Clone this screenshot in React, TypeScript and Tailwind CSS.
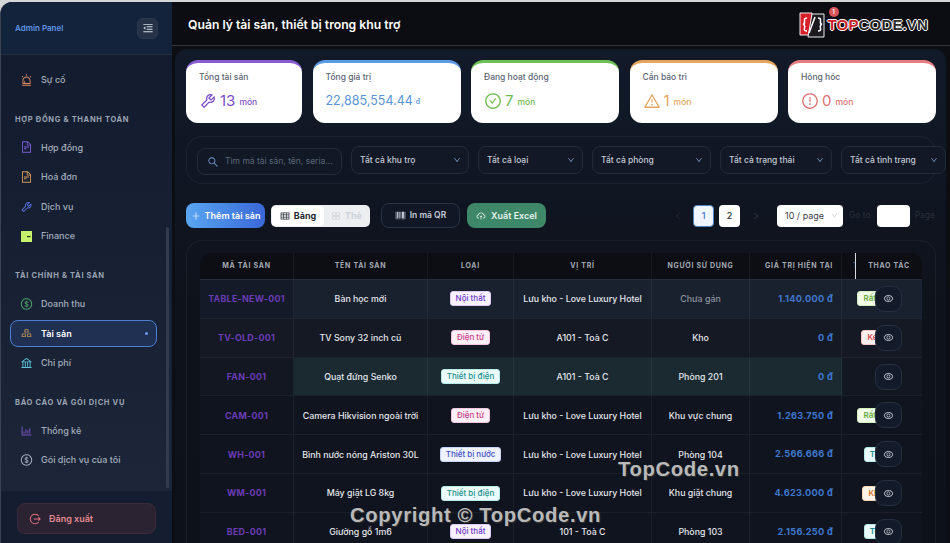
import type { ReactNode } from "react";
import {
  AiOutlineAlert,
  AiOutlineAppstore,
  AiOutlineBank,
  AiOutlineBarChart,
  AiOutlineBarcode,
  AiOutlineCheckCircle,
  AiOutlineCloudUpload,
  AiOutlineDollar,
  AiOutlineDown,
  AiOutlineExclamationCircle,
  AiOutlineEye,
  AiOutlineFileText,
  AiOutlineGold,
  AiOutlineLeft,
  AiOutlineMenuFold,
  AiOutlinePlus,
  AiOutlineRight,
  AiOutlineSearch,
  AiOutlineTable,
  AiOutlineTool,
  AiOutlineWarning,
} from "react-icons/ai";

function FinanceIcon() {
  return (
    <svg width="11" height="11" viewBox="0 0 11 11">
      <rect width="11" height="11" fill="#c8f26b" />
      <rect x="6" y="5" width="3.5" height="1.2" fill="#26351a" />
    </svg>
  );
}

function LogoutIcon() {
  return (
    <svg width="12" height="12" viewBox="0 0 13 13" fill="none" stroke="#e0727c" strokeWidth="1.1">
      <path d="M10.6 3.2A5.2 5.2 0 1 0 10.6 9.8" />
      <path d="M5.2 6.5H12M10.2 4.8L12 6.5L10.2 8.2" />
    </svg>
  );
}

function NavItem({ icon, label, active }: { icon: ReactNode; label: string; active?: boolean }) {
  return (
    <div
      className={
        active
          ? "my-[1.3px] ml-[9px] mr-[15px] flex h-[27px] items-center rounded-lg border-[1.5px] border-[#4d7fd0] bg-[#1f3053] pl-[9px] pr-[8px] text-[9px] font-semibold text-white"
          : "ml-[9px] mr-[15px] flex h-[29.6px] items-center pl-[10px] text-[9px] font-medium text-[#a5aebd]"
      }
    >
      <span className="flex w-[13px] justify-center text-[14px]">{icon}</span>
      <span className="ml-[8px] flex-1">{label}</span>
      {active && <span className="h-[3px] w-[3px] rounded-full bg-[#6d9ce8]" />}
    </div>
  );
}

function NavLabel({ text }: { text: string }) {
  return (
    <div className="mb-[6px] mt-[18px] flex h-[14px] items-center pl-[14px] text-[7.5px] font-bold uppercase tracking-[0.09em] text-[#9aa3b2]">
      {text}
    </div>
  );
}

function Sidebar() {
  return (
    <aside className="relative flex w-[172px] shrink-0 flex-col overflow-hidden rounded-tl-xl border-l border-[#3a4352] bg-gradient-to-b from-[#121b2e] to-[#1d2739]">
      <div className="flex h-[53px] shrink-0 items-center justify-between border-b border-[#232e42] bg-[#14233c] pl-[14px] pr-[14px]">
        <span className="text-[8px] font-semibold text-[#5f95e6]">Admin Panel</span>
        <span className="flex h-[21px] w-[21px] items-center justify-center rounded-md border border-[#2c3a4f] bg-[#263347] text-[12px] text-[#d5dbe5]">
          <AiOutlineMenuFold />
        </span>
      </div>
      <nav className="flex-1 pt-[10px]">
        <NavItem icon={<AiOutlineAlert className="text-[#e08a62]" />} label="Sự cố" />
        <NavLabel text="Hợp đồng & Thanh toán" />
        <NavItem icon={<AiOutlineFileText className="text-[#7b5bd6]" />} label="Hợp đồng" />
        <NavItem icon={<AiOutlineFileText className="text-[#d49a5c]" />} label="Hoá đơn" />
        <NavItem icon={<AiOutlineTool className="text-[#5b6fdc]" />} label="Dịch vụ" />
        <NavItem icon={<FinanceIcon />} label="Finance" />
        <NavLabel text="Tài chính & Tài sản" />
        <NavItem icon={<AiOutlineDollar className="text-[#4fa56b]" />} label="Doanh thu" />
        <NavItem active icon={<AiOutlineGold className="text-[#c79a55]" />} label="Tài sản" />
        <NavItem icon={<AiOutlineBank className="text-[#5ec3d8]" />} label="Chi phí" />
        <NavLabel text="Báo cáo và gói dịch vụ" />
        <NavItem icon={<AiOutlineBarChart className="text-[#7d55c9]" />} label="Thống kê" />
        <NavItem icon={<AiOutlineDollar className="text-[#aab3c2]" />} label="Gói dịch vụ của tôi" />
      </nav>
      <div className="absolute right-[3px] top-[225px] h-[261px] w-[3px] rounded-full bg-[#323c4e]" />
      <div className="flex h-[53px] shrink-0 items-start border-t border-[#1c2638] bg-[#151e30] px-[16px] pt-[12px]">
        <button className="flex h-[31px] w-[139px] items-center rounded-lg border border-[#3b2a38] bg-[#2b2331] pl-[11px] text-[9px] font-semibold text-[#e58c93]">
          <LogoutIcon />
          <span className="ml-[8px]">Đăng xuất</span>
        </button>
      </div>
    </aside>
  );
}

function Logo() {
  return (
    <div className="relative flex items-center pt-[3px]">
      <svg width="27" height="28" viewBox="0 0 27 28">
        <path d="M1 2H13L11 24H1Z" fill="#d8202a" stroke="#eee" strokeWidth="1" />
        <path d="M13 3H25V26H9Z" fill="#1b1b1f" stroke="#eee" strokeWidth="1" />
        <path d="M8 7Q5 7 5.5 10T4 13.5Q6.5 14 5.5 17T8 20" fill="none" stroke="#fff" strokeWidth="1.5" />
        <path d="M19 7Q22 7 21.5 10T23 13.5Q20.5 14 21.5 17T19 20" fill="none" stroke="#fff" strokeWidth="1.5" />
        <path d="M16 6L10 22" stroke="#fff" strokeWidth="1.6" />
      </svg>
      <span className="ml-[2px] font-['Liberation_Sans',sans-serif] text-[15px] font-bold tracking-[0.01em] text-[#c9242c] [text-shadow:1px_0_0_#fff,-1px_0_0_#fff,0_1px_0_#fff,0_-1px_0_#fff]">
        TOP<span className="text-[#2b2b2b]">CODE.VN</span>
      </span>
      <span className="absolute left-[30px] top-[-1px] flex h-[10px] w-[10px] items-center justify-center rounded-full bg-[#d9535a] text-[6px] font-semibold leading-none text-white">
        1
      </span>
    </div>
  );
}

function StatCard({
  title,
  bar,
  color,
  icon,
  value,
  unit,
  wide,
  small,
}: {
  title: string;
  bar: string;
  color: string;
  icon?: ReactNode;
  value: string;
  unit: string;
  wide?: boolean;
  small?: boolean;
}) {
  return (
    <div className={`${wide ? "w-[116px] shrink-0" : "flex-1"} h-[63px] rounded-xl border-t-[3px] bg-white pl-[13px] pr-2 pt-[8px] ${bar}`}>
      <div className="text-[8.5px] font-medium text-[#5b6472]">{title}</div>
      <div className={`mt-[7px] flex items-center ${color}`}>
        {icon && <span className="mr-[3px] text-[18px]">{icon}</span>}
        <span className={small ? "text-[12.5px] leading-[20px]" : "text-[15px] leading-[20px]"}>{value}</span>
        <span className={small ? "ml-[3px] mt-[3px] text-[7px] font-medium" : "ml-[4px] mt-[3px] text-[8.5px] font-medium"}>{unit}</span>
      </div>
    </div>
  );
}

function SelectBox({ label, width }: { label: string; width: string }) {
  return (
    <div className={`${width} flex h-[28px] shrink-0 items-center justify-between rounded-lg border border-[#232c3c] bg-[#121826] pl-[8px] pr-[7px] text-[8.5px] font-medium text-[#c3cad5]`}>
      <span>{label}</span>
      <AiOutlineDown className="text-[8px] text-[#7f9cc9]" />
    </div>
  );
}

type Row = {
  code: string;
  name: string;
  type: string;
  typeClass: string;
  place: string;
  user: string;
  value: string;
  status?: string;
  statusClass?: string;
  rowClass: string;
};

const furniture = "border-[#dcc9f7] bg-[#f8f1ff] text-[#6d3bc4]";
const electronics = "border-[#f7c6de] bg-[#fff0f7] text-[#c43c86]";
const electric = "border-[#b5ece8] bg-[#eafbfa] text-[#1c8f8d]";
const water = "border-[#c8d3f7] bg-[#eff3ff] text-[#3d4fc0]";
const good = "border-[#d0efbd] bg-[#f2fce8] text-[#6aaa45]";
const bad = "border-[#f7c8c8] bg-[#fff0f0] text-[#cf4a4a]";
const ok = "border-[#b5ece8] bg-[#e8fbfa] text-[#1c8f8d]";
const fair = "border-[#f6d5b4] bg-[#fff4e8] text-[#d0772e]";

const rows: Row[] = [
  { code: "TABLE-NEW-001", name: "Bàn học mới", type: "Nội thất", typeClass: furniture, place: "Lưu kho - Love Luxury Hotel", user: "Chưa gán", value: "1.140.000 đ", status: "Rất tốt", statusClass: good, rowClass: "bg-[#1a212e]" },
  { code: "TV-OLD-001", name: "TV Sony 32 inch cũ", type: "Điện tử", typeClass: electronics, place: "A101 - Toà C", user: "Kho", value: "0 đ", status: "Kém", statusClass: bad, rowClass: "bg-[#141924]" },
  { code: "FAN-001", name: "Quạt đứng Senko", type: "Thiết bị điện", typeClass: electric, place: "A101 - Toà C", user: "Phòng 201", value: "0 đ", rowClass: "bg-[#121722]" },
  { code: "CAM-001", name: "Camera Hikvision ngoài trời", type: "Điện tử", typeClass: electronics, place: "Lưu kho - Love Luxury Hotel", user: "Khu vực chung", value: "1.263.750 đ", status: "Rất tốt", statusClass: good, rowClass: "bg-[#10141e]" },
  { code: "WH-001", name: "Bình nước nóng Ariston 30L", type: "Thiết bị nước", typeClass: water, place: "Lưu kho - Love Luxury Hotel", user: "Phòng 104", value: "2.566.666 đ", status: "Tốt", statusClass: ok, rowClass: "bg-[#10141e]" },
  { code: "WM-001", name: "Máy giặt LG 8kg", type: "Thiết bị điện", typeClass: electric, place: "Lưu kho - Love Luxury Hotel", user: "Khu giặt chung", value: "4.623.000 đ", status: "Khá", statusClass: fair, rowClass: "bg-[#10141e]" },
  { code: "BED-001", name: "Giường gỗ 1m6", type: "Nội thất", typeClass: furniture, place: "101 - Toà C", user: "Phòng 103", value: "2.156.250 đ", status: "Tốt", statusClass: ok, rowClass: "bg-[#10141e]" },
];

const cols = "grid grid-cols-[94px_134px_86px_138px_98px_92px_80px]";
const cell = "flex items-center justify-center border-r border-white/5 h-full";

function AssetTable() {
  return (
    <div className="relative w-[722px] overflow-hidden rounded-t-xl">
      <div className={`${cols} h-[26px] bg-[#0c0e13] text-[7px] font-bold uppercase tracking-[0.1em] text-[#a3a9b3]`}>
        <div className={cell}>Mã tài sản</div>
        <div className={cell}>Tên tài sản</div>
        <div className={cell}>Loại</div>
        <div className={cell}>Vị trí</div>
        <div className={cell}>Người sử dụng</div>
        <div className={`${cell} justify-end pr-[8px]`}>Giá trị hiện tại</div>
        <div className="flex items-center overflow-hidden whitespace-nowrap pl-[11px] text-[#4b5563]">Tình trạng</div>
      </div>
      <div className="absolute right-0 top-0 flex h-[26px] w-[67px] items-center justify-center border-l border-[#d7dbe0] bg-[#0c0e13] text-[7px] font-bold uppercase tracking-[0.1em] text-[#a3a9b3]">
        Thao tác
      </div>
      {rows.map((r) => {
        const fan = r.code === "FAN-001";
        const tint = fan ? `${cell} bg-[#1a2a30]` : cell;
        return (
          <div key={r.code} className={`${cols} relative h-[38.83px] border-t border-white/5 text-[8.8px] font-medium text-[#e4e7ec] ${r.rowClass}`}>
            <div className={`${cell} text-[8.9px] font-bold tracking-[0.03em] text-[#6a3cb5] ${r.code === "TABLE-NEW-001" ? "bg-[#141a28]" : ""}`}>{r.code}</div>
            <div className={tint}>{r.name}</div>
            <div className={tint}>
              <span className={`rounded-[3px] border px-[5px] py-[1px] text-[8px] leading-[11px] ${r.typeClass}`}>{r.type}</span>
            </div>
            <div className={tint}>{r.place}</div>
            <div className={`${tint} ${r.user === "Chưa gán" ? "text-[#8d94a0]" : ""}`}>{r.user}</div>
            <div className={`${tint} justify-end pr-[8px] text-[9.2px] font-bold tracking-[0.03em] text-[#3f78cf]`}>{r.value}</div>
            <div className="flex h-full items-center justify-center pr-[12px]">
              {r.status && (
                <span className={`whitespace-nowrap rounded-[3px] border px-[5px] py-[1px] text-[8px] font-semibold leading-[11px] ${r.statusClass}`}>{r.status}</span>
              )}
            </div>
            <div className={`absolute right-0 top-0 flex h-full items-center ${fan ? "w-[66px] bg-[#121722] pl-[19px]" : "w-[47px]"}`}>
              <span className="flex h-[26px] w-[27px] items-center justify-center rounded-[9px] border border-[#262f42] bg-[#131a29] text-[11px] text-[#c8cfda]">
                <AiOutlineEye />
              </span>
            </div>
          </div>
        );
      })}
    </div>
  );
}

export default function App() {
  return (
    <div className="relative flex h-[543px] w-[950px] overflow-hidden bg-[#d5d6d8] pt-[2px] font-['Inter',sans-serif]">
      <Sidebar />
      <main className="flex min-w-0 flex-1 flex-col bg-[#0c0e14]">
        <header className="flex h-[44px] shrink-0 items-center justify-between border-b border-[#33353a] bg-[#0b0d12] pl-[16px] pr-[22px]">
          <h1 className="pt-[3px] text-[12.2px] font-semibold text-white">Quản lý tài sản, thiết bị trong khu trợ</h1>
          <Logo />
        </header>
        <div className="ml-[3px] mt-[3px] w-[771px] flex-1 rounded-t-xl bg-gradient-to-b from-[#121a2a] via-[#0e121b] to-[#0d1119] pl-[11px] pt-[11px]">
          <div className="flex w-[750px] gap-[10.5px]">
            <StatCard wide title="Tổng tài sản" bar="border-[#8a5bd0]" color="text-[#7a4fc4]" icon={<AiOutlineTool />} value="13" unit="món" />
            <StatCard small title="Tổng giá trị" bar="border-[#5d9ae6]" color="text-[#5a93d6]" value="22,885,554.44" unit="đ" />
            <StatCard title="Đang hoạt động" bar="border-[#6fbf57]" color="text-[#6cb950]" icon={<AiOutlineCheckCircle />} value="7" unit="món" />
            <StatCard title="Cần bảo trì" bar="border-[#e6a55f]" color="text-[#e3a562]" icon={<AiOutlineWarning />} value="1" unit="món" />
            <StatCard title="Hỏng hóc" bar="border-[#e57f7f]" color="text-[#de6f6f]" icon={<AiOutlineExclamationCircle />} value="0" unit="món" />
          </div>

          <div className="mt-[13px] flex h-[48px] w-[750px] items-center gap-[9px] rounded-2xl border border-white/5 pl-[10px]">
            <div className="mt-[3px] flex h-[27px] w-[145px] shrink-0 items-center rounded-lg border border-[#232c3c] bg-[#121826] pl-[9px] text-[8.5px] text-[#5b6678]">
              <AiOutlineSearch className="text-[12px] text-[#6f97d6]" />
              <span className="ml-[6px]">Tìm mã tài sản, tên, seria...</span>
            </div>
            <SelectBox label="Tất cả khu trọ" width="w-[118px]" />
            <SelectBox label="Tất cả loại" width="w-[105px]" />
            <SelectBox label="Tất cả phòng" width="w-[119px]" />
            <SelectBox label="Tất cả trạng thái" width="w-[112px]" />
            <SelectBox label="Tất cả tình trạng" width="w-[105px]" />
          </div>

          <div className="mt-[19px] flex h-[25px] w-[750px] items-center text-[9px] font-semibold">
            <button className="flex h-[25px] w-[79px] items-center justify-center gap-[4px] rounded-lg bg-gradient-to-r from-[#5aa5f0] to-[#3a68d8] text-white">
              <AiOutlinePlus className="text-[10px]" />
              Thêm tài sản
            </button>
            <div className="ml-[6px] flex h-[22px] w-[99px] rounded-[5px] bg-[#eceef2] p-[1px]">
              <span className="flex w-[52px] items-center justify-center gap-[4px] rounded-[4px] bg-white font-bold text-[#252a33]">
                <AiOutlineTable className="text-[10px]" />
                Bảng
              </span>
              <span className="flex flex-1 items-center justify-center gap-[4px] font-bold text-[#ccd1d9]">
                <AiOutlineAppstore className="text-[10px]" />
                Thẻ
              </span>
            </div>
            <button className="ml-[11px] flex h-[25px] w-[79px] items-center justify-center gap-[4px] rounded-lg border border-[#2a3344] bg-[#111725] text-[8.5px] text-[#c5ccd8]">
              <AiOutlineBarcode className="text-[11px]" />
              In mã QR
            </button>
            <button className="ml-[7px] flex h-[25px] w-[79px] items-center justify-center gap-[5px] rounded-lg bg-[#3f8769] text-[#e6f2ec]">
              <AiOutlineCloudUpload className="text-[10px]" />
              Xuất Excel
            </button>
            <div className="ml-auto flex items-center pr-[1px] text-[9px] font-medium">
              <AiOutlineLeft className="mr-[11px] text-[8px] text-[#262b35]" />
              <span className="flex h-[22px] w-[21px] items-center justify-center rounded-[4px] border border-[#4f82cc] bg-[#f1f6fd] text-[#3f74c4]">1</span>
              <span className="ml-[5px] flex h-[22px] w-[21px] items-center justify-center rounded-[4px] bg-white text-[#2c323c]">2</span>
              <AiOutlineRight className="ml-[12px] text-[8px] text-[#3a404b]" />
              <span className="ml-[17px] flex h-[22px] w-[66px] items-center justify-between rounded-[4px] bg-white pl-[8px] pr-[5px] font-normal text-[#3a404b]">
                10 / page
                <AiOutlineDown className="text-[7px] text-[#c1c5cc]" />
              </span>
              <span className="ml-[6px] text-[8.5px] font-normal text-[#2a2f39]">Go to</span>
              <span className="ml-[6px] h-[22px] w-[33px] rounded-[4px] bg-white" />
              <span className="ml-[5px] text-[8.5px] font-normal text-[#2a2f39]">Page</span>
            </div>
          </div>

          <div className="mt-[12px] h-[320px] w-[750px] rounded-2xl border border-white/5 pl-[13px] pt-[12px]">
            <AssetTable />
          </div>
        </div>
      </main>
      <div className="pointer-events-none absolute left-[618px] top-[454px] font-['Liberation_Sans',sans-serif] text-[20.3px] font-bold tracking-[0.03em] text-[#b9b9b9] [text-shadow:1px_1px_1px_#333]">
        TopCode.vn
      </div>
      <div className="pointer-events-none absolute left-[350px] top-[500px] font-['Liberation_Sans',sans-serif] text-[20.3px] font-bold tracking-[0.03em] text-[#b9b9b9] [text-shadow:1px_1px_1px_#333]">
        Copyright © TopCode.vn
      </div>
    </div>
  );
}
